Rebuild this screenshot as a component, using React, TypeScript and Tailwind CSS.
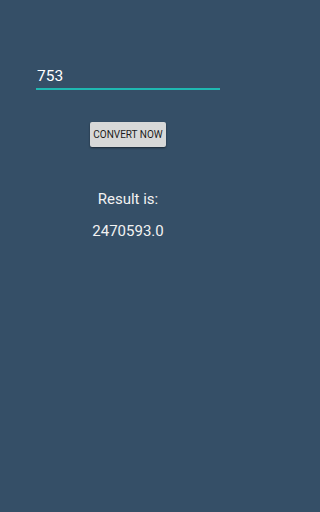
export default function App() {
  return (
    <div className="min-h-[512px] w-full bg-[#354f67] font-['Roboto',sans-serif] text-white">
      <div className="w-[256px]">
        <div className="px-9 pt-[66px]">
          <div className="flex h-[24px] items-end border-b-2 border-[#1fb8b1] pb-[2px]">
            <span className="pl-[1px] text-[15.5px] leading-[20px]">753</span>
          </div>
        </div>
        <div className="mt-[32px] flex justify-center">
          <button className="h-[25px] w-[76px] rounded-[2px] bg-[#d7d8d8] text-[10px] font-normal text-[#1c1c1c] shadow-[0_1px_2px_rgba(0,0,0,0.5)]">
            CONVERT NOW
          </button>
        </div>
        <div className="mt-[42px] text-center text-[15px] leading-[20px] text-[#f2f2f2]">Result is:</div>
        <div className="mt-[12px] text-center text-[15px] leading-[20px] text-[#f2f2f2]">2470593.0</div>
      </div>
    </div>
  );
}
